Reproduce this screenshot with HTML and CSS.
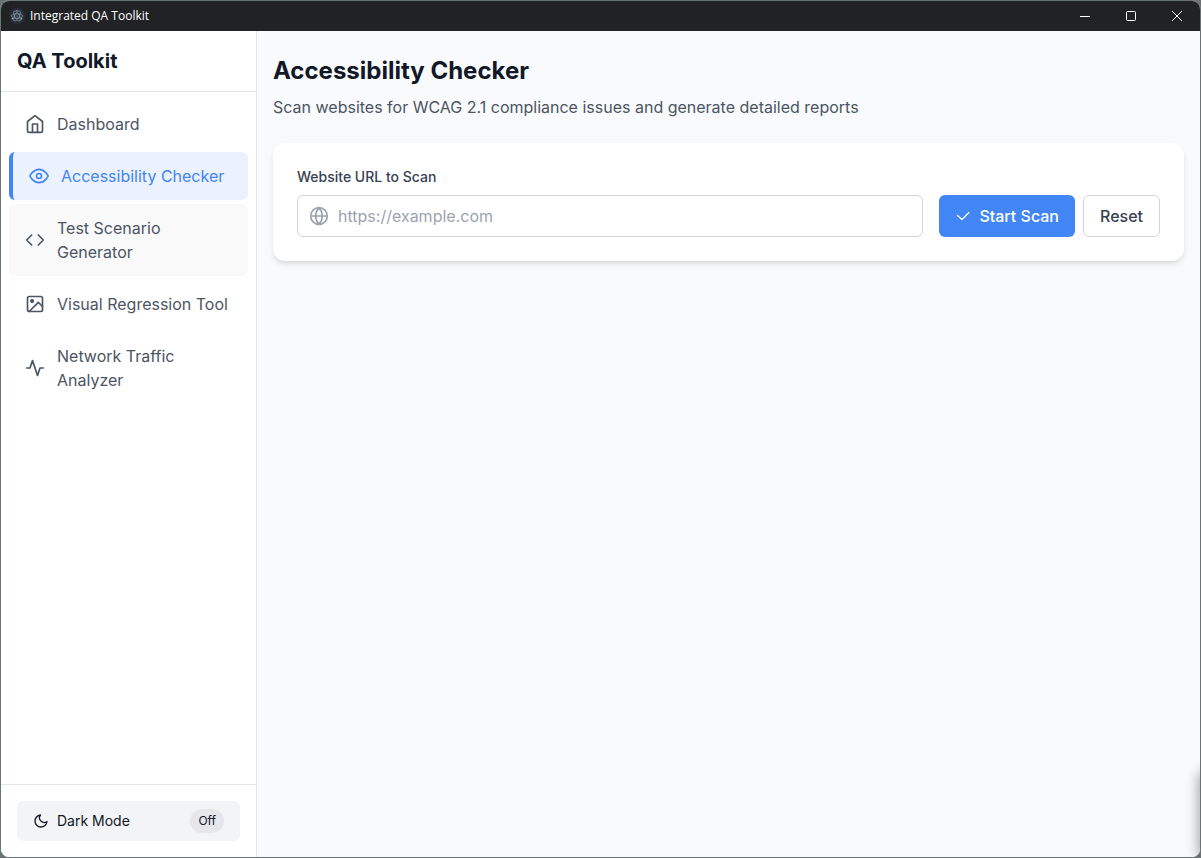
FILE: index.html
```html
<!DOCTYPE html>
<html lang="en">
<head>
<meta charset="utf-8">
<meta name="viewport" content="width=device-width, initial-scale=1">
<title>Integrated QA Toolkit</title>
<link rel="stylesheet" href="styles.css">
</head>
<body>
<div class="window">
  <header class="titlebar">
    <svg class="app-icon" viewBox="0 0 16 16" fill="none" aria-hidden="true">
      <circle cx="8" cy="8" r="8" fill="#2b2e3a"/>
      <g stroke="#a5c4cc" stroke-opacity=".8" stroke-width=".6">
        <ellipse cx="8" cy="8" rx="5.6" ry="2.3"/>
        <ellipse cx="8" cy="8" rx="5.6" ry="2.3" transform="rotate(60 8 8)"/>
        <ellipse cx="8" cy="8" rx="5.6" ry="2.3" transform="rotate(120 8 8)"/>
      </g>
      <g fill="#a5c4cc">
        <circle cx="8" cy="8" r=".6"/>
        <circle cx="8" cy="2.6" r=".7"/>
        <circle cx="3.4" cy="10.8" r=".7"/>
        <circle cx="12.6" cy="10.8" r=".7"/>
      </g>
    </svg>
    <span class="titlebar-text">Integrated QA Toolkit</span>
    <div class="window-controls">
      <button class="window-button" type="button" aria-label="Minimize">
        <svg viewBox="0 0 10 10" fill="none" stroke="currentColor"><path d="M0 5.5h10"/></svg>
      </button>
      <button class="window-button" type="button" aria-label="Maximize">
        <svg viewBox="0 0 10 10" fill="none" stroke="currentColor"><rect x=".5" y=".5" width="9" height="9" rx="1"/></svg>
      </button>
      <button class="window-button" type="button" aria-label="Close">
        <svg viewBox="0 0 10 10" fill="none" stroke="currentColor"><path d="M0 0l10 10M10 0L0 10"/></svg>
      </button>
    </div>
  </header>

  <div class="app">
    <aside class="sidebar">
      <div class="brand">QA Toolkit</div>
      <nav class="nav">
        <a class="nav-item" href="#dashboard">
          <svg class="icon" viewBox="0 0 24 24"><path d="M3 9l9-7 9 7v11a2 2 0 0 1-2 2H5a2 2 0 0 1-2-2z"/><path d="M9 22V12h6v10"/></svg>
          <span>Dashboard</span>
        </a>
        <a class="nav-item active" href="#accessibility" aria-current="page">
          <svg class="icon" viewBox="0 0 24 24"><path d="M1 12s4-8 11-8 11 8 11 8-4 8-11 8-11-8-11-8z"/><circle cx="12" cy="12" r="3"/></svg>
          <span>Accessibility Checker</span>
        </a>
        <a class="nav-item highlighted" href="#scenarios">
          <svg class="icon" viewBox="0 0 24 24"><path d="M16 18l6-6-6-6M8 6l-6 6 6 6"/></svg>
          <span>Test Scenario Generator</span>
        </a>
        <a class="nav-item" href="#visual">
          <svg class="icon" viewBox="0 0 24 24"><rect x="3" y="3" width="18" height="18" rx="2"/><circle cx="8.5" cy="8.5" r="1.5" fill="currentColor"/><path d="M21 15l-5-5L5 21"/></svg>
          <span>Visual Regression Tool</span>
        </a>
        <a class="nav-item" href="#network">
          <svg class="icon" viewBox="0 0 24 24"><path d="M22 12h-4l-3 9L9 3l-3 9H2"/></svg>
          <span>Network Traffic Analyzer</span>
        </a>
      </nav>
      <div class="sidebar-footer">
        <button class="theme-toggle" type="button">
          <svg class="icon icon-small" viewBox="0 0 24 24"><path d="M21 12.79A9 9 0 1 1 11.21 3 7 7 0 0 0 21 12.79z"/></svg>
          <span>Dark Mode</span>
          <span class="pill">Off</span>
        </button>
      </div>
    </aside>

    <main class="main">
      <h1 class="page-title">Accessibility Checker</h1>
      <p class="page-subtitle">Scan websites for WCAG 2.1 compliance issues and generate detailed reports</p>
      <form class="card">
        <label class="field-label" for="url">Website URL to Scan</label>
        <div class="form-row">
          <div class="url-field">
            <svg class="icon" viewBox="0 0 24 24"><circle cx="12" cy="12" r="10"/><path d="M2 12h20M12 2a15.3 15.3 0 0 1 4 10 15.3 15.3 0 0 1-4 10 15.3 15.3 0 0 1-4-10 15.3 15.3 0 0 1 4-10z"/></svg>
            <input class="url-input" id="url" type="url" placeholder="https://example.com">
          </div>
          <div class="actions">
            <button class="button primary" type="button">
              <svg class="icon icon-small check" viewBox="0 0 16 16"><path d="M14 4.5L7 11.5L2.5 7.5"/></svg>
              Start Scan
            </button>
            <button class="button secondary" type="reset">Reset</button>
          </div>
        </div>
      </form>
    </main>
  </div>
</div>
</body>
</html>
```
FILE: styles.css
```css
*, *::before, *::after {
  box-sizing: border-box;
}

body {
  margin: 0;
  background: #6b7474;
  color: #111827;
  font-family: Inter, "Liberation Sans", sans-serif;
  font-size: 16px;
  line-height: 24px;
}

button, input {
  font: inherit;
  color: inherit;
}

.window {
  position: relative;
  display: flex;
  flex-direction: column;
  min-height: 100vh;
  border: 1px solid #6b7474;
  border-radius: 9px;
  overflow: hidden;
  background: #f9fafb;
}

/* soft shade along the lower right edge */
.window::after {
  content: "";
  position: absolute;
  right: -12px;
  bottom: 0;
  width: 12px;
  height: 84px;
  box-shadow: 0 0 14px rgba(0, 0, 0, .45);
  pointer-events: none;
}

.titlebar {
  display: flex;
  align-items: center;
  height: 30px;
  padding-left: 8px;
  background: #202223;
  color: #fff;
}

.app-icon {
  width: 16px;
  height: 16px;
  margin-right: 5px;
}

.titlebar-text {
  font-family: "Open Sans", "Noto Sans", sans-serif;
  font-size: 12px;
  line-height: 16px;
}

.window-controls {
  display: flex;
  align-self: stretch;
  margin-left: auto;
}

.window-button {
  display: flex;
  align-items: center;
  justify-content: center;
  width: 46px;
  padding: 0;
  border: 0;
  background: transparent;
}

.window-button svg {
  width: 10px;
  height: 10px;
}

.app {
  display: flex;
  flex: 1;
}

.sidebar {
  display: flex;
  flex-direction: column;
  flex: none;
  width: 256px;
  border-right: 1px solid #e5e7eb;
  background: #fff;
}

.brand {
  padding: 16px;
  border-bottom: 1px solid #e5e7eb;
  font-size: 20px;
  font-weight: 700;
  line-height: 28px;
}

.nav {
  display: flex;
  flex: 1;
  flex-direction: column;
  gap: 4px;
  padding: 8px;
}

.nav-item {
  display: flex;
  align-items: center;
  gap: 12px;
  padding: 12px 16px;
  border-radius: 6px;
  color: #4b5563;
  text-decoration: none;
}

.nav-item.active {
  border-left: 4px solid #4285f4;
  background: #ebf2fe;
  color: #4285f4;
}

.nav-item.highlighted {
  background: #f9f9f9;
}

.icon {
  flex: none;
  width: 20px;
  height: 20px;
  fill: none;
  stroke: currentColor;
  stroke-width: 2;
  stroke-linecap: round;
  stroke-linejoin: round;
}

.icon-small {
  width: 16px;
  height: 16px;
}

.sidebar-footer {
  padding: 16px;
  border-top: 1px solid #e5e7eb;
}

.theme-toggle {
  display: flex;
  align-items: center;
  gap: 8px;
  width: 100%;
  padding: 8px 16px;
  border: 0;
  border-radius: 6px;
  background: #f3f4f6;
  font-size: 14px;
}

.pill {
  margin-left: auto;
  padding: 4px 8px;
  border-radius: 12px;
  background: #e5e7eb;
  font-size: 12px;
  line-height: 16px;
}

.main {
  flex: 1;
  min-width: 0;
  padding: 24px 16px;
  background: #f9fafc;
}

.page-title {
  margin: 0 0 8px;
  font-size: 24px;
  font-weight: 700;
  line-height: 32px;
}

.page-subtitle {
  margin: 0 0 24px;
  color: #4b5563;
}

.card {
  padding: 24px;
  border-radius: 12px;
  background: #fff;
  box-shadow: 0 4px 6px -1px rgba(0, 0, 0, .1), 0 2px 4px -1px rgba(0, 0, 0, .06);
}

.field-label {
  display: block;
  margin-bottom: 8px;
  color: #374151;
  font-size: 14px;
  font-weight: 500;
  line-height: 20px;
}

.form-row {
  display: flex;
  gap: 16px;
}

.url-field {
  display: flex;
  flex: 1;
  align-items: center;
  gap: 9px;
  min-width: 0;
  padding: 0 11px;
  border: 1px solid #d1d5db;
  border-radius: 6px;
  color: #9ca3af;
}

.url-input {
  flex: 1;
  min-width: 0;
  padding: 8px 0;
  border: 0;
  outline: 0;
  background: transparent;
  color: #111827;
}

.url-input::placeholder {
  color: #9ca3af;
}

.actions {
  display: flex;
  gap: 8px;
}

.button {
  display: flex;
  align-items: center;
  gap: 8px;
  padding: 8px 16px;
  border: 0;
  border-radius: 6px;
  font-weight: 500;
}

.primary {
  background: #4285f4;
  color: #fff;
}

.secondary {
  border: 1px solid #d1d5db;
  background: #fff;
  color: #374151;
}

.check {
  stroke-width: 1.2;
}
```
